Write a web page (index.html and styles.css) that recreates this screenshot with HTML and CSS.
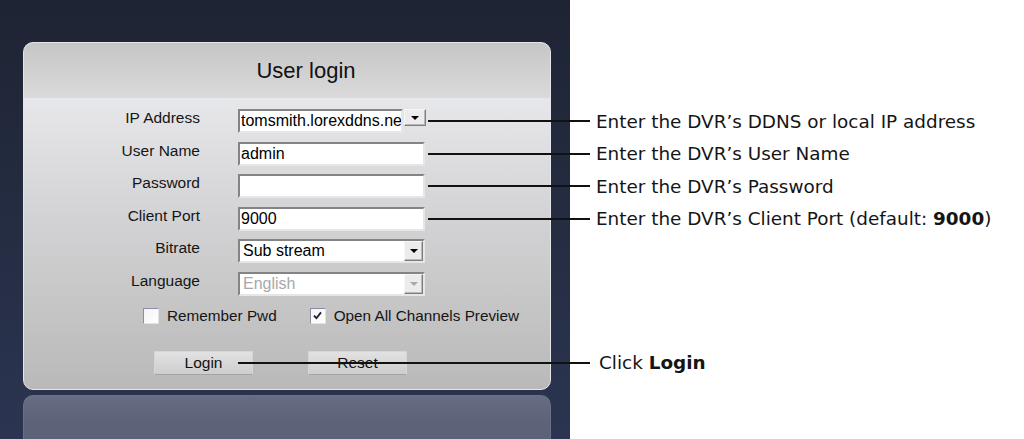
FILE: index.html
```html
<!DOCTYPE html>
<html lang="en">
<head>
  <meta charset="UTF-8">
  <meta name="viewport" content="width=device-width, initial-scale=1.0">
  <title>User login</title>
  <link rel="stylesheet" href="styles.css">
</head>
<body>
  <div class="page">
    <div class="screen">
      <div class="login-win">
        <div class="win-title">User login</div>
        <div class="win-body">
          <div class="form">
            <div class="form-row">
              <span class="form-label">IP Address</span>
              <div class="combo-edit">
                <span class="field ip-field">tomsmith.lorexddns.ne</span>
                <span class="drop-btn small"></span>
              </div>
              <div class="callout">
                <span class="callout-line"></span>
                <span>Enter the DVR’s DDNS or local IP address</span>
              </div>
            </div>
            <div class="form-row">
              <span class="form-label">User Name</span>
              <span class="field">admin</span>
              <div class="callout">
                <span class="callout-line"></span>
                <span>Enter the DVR’s User Name</span>
              </div>
            </div>
            <div class="form-row">
              <span class="form-label">Password</span>
              <span class="field"></span>
              <div class="callout">
                <span class="callout-line"></span>
                <span>Enter the DVR’s Password</span>
              </div>
            </div>
            <div class="form-row">
              <span class="form-label">Client Port</span>
              <span class="field">9000</span>
              <div class="callout">
                <span class="callout-line"></span>
                <span>Enter the DVR’s Client Port (default: <b>9000</b>)</span>
              </div>
            </div>
            <div class="form-row">
              <span class="form-label">Bitrate</span>
              <div class="field select">
                <span>Sub stream</span>
                <span class="drop-btn"></span>
              </div>
            </div>
            <div class="form-row">
              <span class="form-label">Language</span>
              <div class="field select disabled">
                <span>English</span>
                <span class="drop-btn"></span>
              </div>
            </div>
          </div>

          <div class="checks">
            <div class="check">
              <span class="check-box"></span>
              <span>Remember Pwd</span>
            </div>
            <div class="check">
              <span class="check-box">
                <svg viewBox="0 0 9 9" width="9" height="9"><path d="M1 4.6 L3.4 7.2 L8 1.4" stroke="#1c1c28" stroke-width="1.8" fill="none"/></svg>
              </span>
              <span>Open All Channels Preview</span>
            </div>
          </div>

          <div class="buttons">
            <button class="btn">Login</button>
            <button class="btn">Reset</button>
            <div class="callout login-callout">
              <span class="callout-line"></span>
              <span>Click <b>Login</b></span>
            </div>
          </div>
        </div>
      </div>
      <div class="reflection"></div>
    </div>
  </div>
</body>
</html>
```

FILE: styles.css
```css
body {
  margin: 0;
  font-family: "Liberation Sans", Arial, sans-serif;
  background: #fff;
  color: #111;
}
.page {
  display: flex;
  height: 439px;
  overflow: hidden;
}
.screen {
  width: 570px;
  flex: none;
  box-sizing: border-box;
  padding: 42px 0 0 23px;
  background: linear-gradient(#1e2433, #2b3551);
}
.login-win {
  width: 528px;
  height: 348px;
  box-sizing: border-box;
  border: 1px solid #e4e5ea;
  border-radius: 10px;
  display: flex;
  flex-direction: column;
  background: linear-gradient(#f0f1f5, #d3d3d5 50%, #b9b9b9);
}
.win-title {
  height: 55px;
  flex: none;
  box-sizing: border-box;
  padding-left: 38px;
  border-radius: 9px 9px 0 0;
  background: linear-gradient(#c6c6c6, #dadada);
  display: flex;
  align-items: center;
  justify-content: center;
  font-size: 22px;
  color: #111;
}
.win-body {
  padding-top: 11px;
  display: flex;
  flex-direction: column;
}
.form {
  display: flex;
  flex-direction: column;
  gap: 8.6px;
}
.form-row {
  display: flex;
  align-items: flex-start;
  height: 24px;
}
.form-label {
  width: 176px;
  margin-right: 38px;
  flex: none;
  text-align: right;
  font-size: 15.5px;
  line-height: 18px;
  color: #151515;
}
.field {
  width: 187px;
  height: 24px;
  flex: none;
  box-sizing: border-box;
  border: 2px solid;
  border-color: #848484 #e6e6e6 #e6e6e6 #848484;
  background: #fff;
  padding-left: 1px;
  font-size: 16px;
  line-height: 20px;
  color: #000;
  white-space: nowrap;
  overflow: hidden;
}
.combo-edit {
  width: 187px;
  flex: none;
  display: flex;
  gap: 1px;
}
.ip-field {
  width: 165px;
}
.select {
  display: flex;
  justify-content: space-between;
  padding-left: 3px;
}
.disabled {
  color: #a8a8a8;
}
.drop-btn {
  width: 19px;
  height: 20px;
  flex: none;
  box-sizing: border-box;
  border: 1px solid;
  border-color: #f6f6f6 #7e7e7e #7e7e7e #f6f6f6;
  box-shadow: inset -1px -1px 0 #b8b8b8;
  background: #ececec;
  display: flex;
  align-items: center;
  justify-content: center;
}
.drop-btn.small {
  width: 22px;
  height: 17px;
}
.drop-btn::after {
  content: "";
  border-left: 4px solid transparent;
  border-right: 4px solid transparent;
  border-top: 4px solid #000;
}
.disabled .drop-btn::after {
  border-top-color: #a8a8a8;
}
.callout {
  display: flex;
  align-items: center;
  height: 24px;
  margin-left: 3px;
  flex: none;
  white-space: nowrap;
  font-family: "DejaVu Sans", sans-serif;
  font-size: 18.4px;
  color: #151515;
}
.callout-line {
  width: 162px;
  height: 2px;
  margin-right: 6px;
  background: #111;
}
.checks {
  display: flex;
  align-items: center;
  gap: 33px;
  height: 16px;
  margin: 12px 0 0 119px;
  font-size: 15.3px;
  color: #151515;
}
.check {
  display: flex;
  align-items: center;
  gap: 8px;
}
.check-box {
  width: 16px;
  height: 16px;
  box-sizing: border-box;
  border: 1px solid;
  border-color: #8c8ca4 #e2e2e2 #e2e2e2 #8c8ca4;
  background: linear-gradient(135deg, #f4f4f8, #fff);
  display: flex;
  align-items: center;
  justify-content: center;
}
.buttons {
  position: relative;
  display: flex;
  gap: 55px;
  margin: 27px 0 0 130px;
}
.btn {
  width: 99px;
  height: 24px;
  padding: 0;
  border: 1px solid #d6d6d6;
  border-bottom-color: #a4a4a4;
  background: linear-gradient(#e2e2e2, #cdcdcd);
  font-family: "Liberation Sans", Arial, sans-serif;
  font-size: 15.5px;
  color: #111;
}
.login-callout {
  position: absolute;
  left: 84px;
  top: 0;
  margin-left: 0;
}
.login-callout .callout-line {
  width: 352px;
  margin-right: 9px;
}
.reflection {
  width: 528px;
  height: 50px;
  margin-top: 5px;
  box-sizing: border-box;
  border: 1px solid #6a7186;
  border-bottom: none;
  border-radius: 10px 10px 0 0;
  background: linear-gradient(#666d82, #5d6479 50%, #5b6277);
}
```
